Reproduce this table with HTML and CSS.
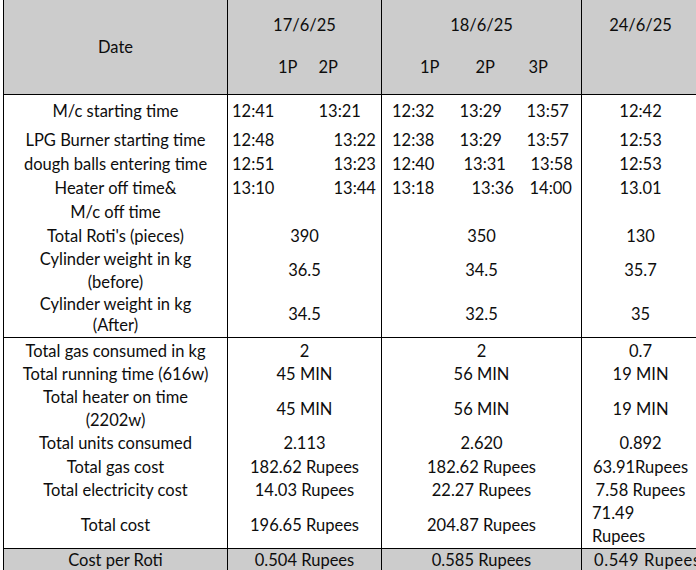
FILE: index.html
```html
<!DOCTYPE html>
<html>
<head>
<meta charset="utf-8">
<link rel="stylesheet" href="styles.css">
</head>
<body>
<table class="sheet">
  <colgroup>
    <col class="c-label">
    <col class="c-17a"><col class="c-17b">
    <col class="c-18a"><col class="c-18b"><col class="c-18c">
    <col class="c-24">
  </colgroup>
  <thead>
    <tr class="h1">
      <th rowspan="2" class="date-label">Date</th>
      <th colspan="2" class="g">17/6/25</th>
      <th colspan="3" class="g">18/6/25</th>
      <th rowspan="2" class="g top">24/6/25</th>
    </tr>
    <tr class="h2">
      <th class="sub in-50">1P</th>
      <th class="sub in-18 gr">2P</th>
      <th class="sub in-38">1P</th>
      <th class="sub in-25">2P</th>
      <th class="sub in-8 gr">3P</th>
    </tr>
  </thead>
  <tbody class="grp">
    <tr class="r-first">
      <td class="lbl">M/c starting time</td>
      <td class="t in-4">12:41</td>
      <td class="t in-18 gr">13:21</td>
      <td class="t in-10">12:32</td>
      <td class="t in-9">13:29</td>
      <td class="t in-6 gr">13:57</td>
      <td class="v">12:42</td>
    </tr>
    <tr>
      <td class="lbl">LPG Burner starting time</td>
      <td class="t in-4">12:48</td>
      <td class="t in-33 gr">13:22</td>
      <td class="t in-10">12:38</td>
      <td class="t in-9">13:29</td>
      <td class="t in-6 gr">13:57</td>
      <td class="v">12:53</td>
    </tr>
    <tr>
      <td class="lbl">dough balls entering time</td>
      <td class="t in-4">12:51</td>
      <td class="t in-33 gr">13:23</td>
      <td class="t in-10">12:40</td>
      <td class="t in-13">13:31</td>
      <td class="t in-10 gr">13:58</td>
      <td class="v">12:53</td>
    </tr>
    <tr>
      <td class="lbl">Heater off time&amp;<br>M/c off time</td>
      <td class="t in-4 top">13:10</td>
      <td class="t in-33 gr top">13:44</td>
      <td class="t in-10 top">13:18</td>
      <td class="t in-21 top">13:36</td>
      <td class="t in-9 gr top">14:00</td>
      <td class="v top">13.01</td>
    </tr>
    <tr>
      <td class="lbl">Total Roti's (pieces)</td>
      <td colspan="2" class="v">390</td>
      <td colspan="3" class="v">350</td>
      <td class="v">130</td>
    </tr>
    <tr class="r-before">
      <td class="lbl">Cylinder weight in kg<br>(before)</td>
      <td colspan="2" class="v">36.5</td>
      <td colspan="3" class="v">34.5</td>
      <td class="v">35.7</td>
    </tr>
    <tr class="r-after">
      <td class="lbl">Cylinder weight in kg<br>(After)</td>
      <td colspan="2" class="v">34.5</td>
      <td colspan="3" class="v">32.5</td>
      <td class="v">35</td>
    </tr>
  </tbody>
  <tbody class="grp grp-cost">
    <tr class="r-cost-first">
      <td class="lbl">Total gas consumed in kg</td>
      <td colspan="2" class="v">2</td>
      <td colspan="3" class="v">2</td>
      <td class="v">0.7</td>
    </tr>
    <tr>
      <td class="lbl">Total running time (616w)</td>
      <td colspan="2" class="v">45 MIN</td>
      <td colspan="3" class="v">56 MIN</td>
      <td class="v">19 MIN</td>
    </tr>
    <tr>
      <td class="lbl">Total heater on time<br>(2202w)</td>
      <td colspan="2" class="v">45 MIN</td>
      <td colspan="3" class="v">56 MIN</td>
      <td class="v">19 MIN</td>
    </tr>
    <tr>
      <td class="lbl">Total units consumed</td>
      <td colspan="2" class="v">2.113</td>
      <td colspan="3" class="v">2.620</td>
      <td class="v">0.892</td>
    </tr>
    <tr>
      <td class="lbl">Total gas cost</td>
      <td colspan="2" class="v">182.62 Rupees</td>
      <td colspan="3" class="v">182.62 Rupees</td>
      <td class="v">63.91Rupees</td>
    </tr>
    <tr>
      <td class="lbl">Total electricity cost</td>
      <td colspan="2" class="v">14.03 Rupees</td>
      <td colspan="3" class="v">22.27 Rupees</td>
      <td class="v">7.58 Rupees</td>
    </tr>
    <tr>
      <td class="lbl">Total cost</td>
      <td colspan="2" class="v">196.65 Rupees</td>
      <td colspan="3" class="v">204.87 Rupees</td>
      <td class="v left">71.49<br>Rupees</td>
    </tr>
  </tbody>
  <tfoot>
    <tr class="foot">
      <td class="lbl">Cost per Roti</td>
      <td colspan="2" class="v">0.504 Rupees</td>
      <td colspan="3" class="v">0.585 Rupees</td>
      <td class="v left wide">0.549 Rupees</td>
    </tr>
  </tfoot>
</table>
</body>
</html>
```

FILE: styles.css
```css
html {
  overflow: hidden;
}
body {
  margin: 0;
  padding: 0 0 0 3px;
  background: #ffffff;
  font-family: "Lato", "Liberation Sans", sans-serif;
  font-size: 16.5px;
  color: #0d0d0d;
}
.sheet {
  border-collapse: collapse;
  table-layout: fixed;
  width: 696px;
  line-height: 24px;
}
.c-label { width: 224px; }
.c-17a { width: 73px; }
.c-17b { width: 81px; }
.c-18a { width: 69px; }
.c-18b { width: 70px; }
.c-18c { width: 61px; }
.c-24 { width: 118px; }

th, td {
  padding: 0;
  font-weight: normal;
  white-space: nowrap;
  vertical-align: middle;
}

/* header */
thead th {
  background: #cccccc;
  border-left: 1px solid #000;
  border-right: 1px solid #000;
}
thead th[rowspan], .h2 th { border-bottom: 1px solid #000; }
.h2 .sub { border-left: none; border-right: none; text-align: left; }
.h2 .sub.gr { border-right: 1px solid #000; }
.h2 .sub:first-child { border-left: 1px solid #000; }
.h1 { height: 47px; }
.h1 .g { padding-top: 3px; }
.h1 .g.top { vertical-align: top; padding-top: 13px; }
.h2 { height: 47px; }
.h2 .sub { padding-bottom: 6px; }
.date-label { text-align: center; }

/* body groups */
.grp td, .foot td {
  border-left: 1px solid #000;
  border-right: 1px solid #000;
}
.grp { border-bottom: 1px solid #000; }
.grp td.t { border-left: none; border-right: none; text-align: left; }
.grp td.t.gr { border-right: 1px solid #000; }
.grp td.top { vertical-align: top; }
.r-first td { height: 24px; padding-top: 4px; padding-bottom: 5px; }
.r-before td { line-height: 23px; }
.r-after td { line-height: 21.5px; }
.grp-cost { line-height: 23.2px; }
.r-cost-first td { padding-top: 2px; }

.lbl { text-align: center; }
.v { text-align: center; }
.v.left { text-align: left; padding-left: 10px; }
.v.wide { padding-left: 12px; letter-spacing: 0.6px; }

.foot td {
  background: #cccccc;
  height: 21px;
  line-height: 20px;
}

/* text indents inside split time columns */
.in-4 { padding-left: 4px; }
.in-6 { padding-left: 6px; }
.in-8 { padding-left: 8px; }
.in-9 { padding-left: 9px; }
.in-10 { padding-left: 10px; }
.in-13 { padding-left: 13px; }
.in-18 { padding-left: 18px; }
.in-21 { padding-left: 21px; }
.in-25 { padding-left: 25px; }
.in-33 { padding-left: 33px; }
.in-38 { padding-left: 38px; }
.in-50 { padding-left: 50px; }
```
